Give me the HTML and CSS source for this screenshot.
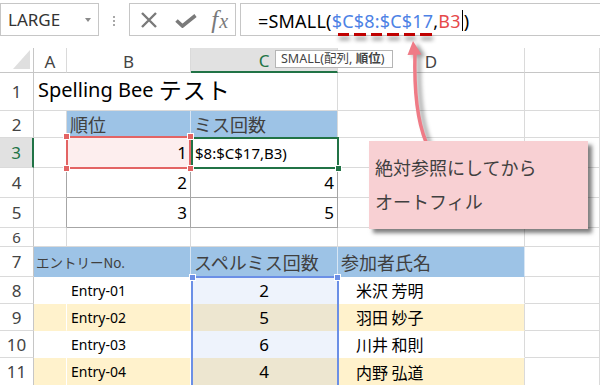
FILE: index.html
```html
<!DOCTYPE html>
<html lang="ja">
<head>
<meta charset="utf-8">
<title>SMALL</title>
<link rel="stylesheet" href="styles.css">
</head>
<body>
<div class="app">
  <div class="toolbar">
    <div class="namebox"><span class="nb-text">LARGE</span><span class="caret"></span></div>
    <div class="grip"><i></i><i></i><i></i></div>
    <div class="btns">
      <svg class="ico-x" width="18" height="16" viewBox="0 0 18 16"><path d="M2 1 L16 15 M16 1 L2 15" stroke="#7a7a7a" stroke-width="2.4" fill="none"/></svg>
      <svg class="ico-ok" width="22" height="14" viewBox="0 0 22 14"><path d="M1.5 6.5 L7.5 12 L20.5 1.5" stroke="#7a7a7a" stroke-width="3.6" fill="none"/></svg>
      <span class="fx"><span class="fx-f">f</span><span class="fx-x">x</span></span>
    </div>
    <div class="formula"><span>=SMALL(</span><span class="f-ref">$C$8:$C$17</span><span>,</span><span class="f-b3">B3</span><span class="cursor"></span><span>)</span></div>
  </div>

  <div class="sheet">
    <div class="c corner"><span class="tri"></span></div>
    <div class="c ch">A</div>
    <div class="c ch">B</div>
    <div class="c ch ch-sel">C</div>
    <div class="c ch">D</div>
    <div class="c ch"></div>

    <div class="c rh">1</div>
    <div class="c span3 title">Spelling Bee&nbsp;<span class="title-ja">テスト</span></div>
    <div class="c"></div>
    <div class="c"></div>

    <div class="c rh">2</div>
    <div class="c"></div>
    <div class="c hd hd-in">順位</div>
    <div class="c hd">ミス回数</div>
    <div class="c"></div>
    <div class="c"></div>

    <div class="c rh rh-sel">3</div>
    <div class="c"></div>
    <div class="c num pink">1</div>
    <div class="c edit">$8:$C$17,B3)</div>
    <div class="c"></div>
    <div class="c"></div>

    <div class="c rh">4</div>
    <div class="c tb-l"></div>
    <div class="c num tb">2</div>
    <div class="c num tb">4</div>
    <div class="c"></div>
    <div class="c"></div>

    <div class="c rh">5</div>
    <div class="c tb-l"></div>
    <div class="c num tb">3</div>
    <div class="c num tb">5</div>
    <div class="c"></div>
    <div class="c"></div>

    <div class="c rh rh-short">6</div>
    <div class="c"></div>
    <div class="c"></div>
    <div class="c"></div>
    <div class="c"></div>
    <div class="c"></div>

    <div class="c rh">7</div>
    <div class="c span2 hd2 entry-hd">エントリーNo.</div>
    <div class="c hd2 hd-in">スペルミス回数</div>
    <div class="c hd2">参加者氏名</div>
    <div class="c"></div>

    <div class="c rh">8</div>
    <div class="c tw"></div>
    <div class="c tw entry">Entry-01</div>
    <div class="c tw cnt">2</div>
    <div class="c tw name">米沢 芳明</div>
    <div class="c"></div>

    <div class="c rh">9</div>
    <div class="c tw cream"></div>
    <div class="c tw cream entry">Entry-02</div>
    <div class="c tw cnt cnt-cream">5</div>
    <div class="c tw cream name">羽田 妙子</div>
    <div class="c"></div>

    <div class="c rh">10</div>
    <div class="c tw"></div>
    <div class="c tw entry">Entry-03</div>
    <div class="c tw cnt">6</div>
    <div class="c tw name">川井 和則</div>
    <div class="c"></div>

    <div class="c rh">11</div>
    <div class="c tw cream"></div>
    <div class="c tw cream entry">Entry-04</div>
    <div class="c tw cnt cnt-cream">4</div>
    <div class="c tw cream name">内野 弘道</div>
    <div class="c"></div>
  </div>

  <div class="frame-green"><span class="h h-br"></span></div>
  <div class="frame-red"><span class="h h-tl"></span><span class="h h-tr"></span><span class="h h-bl"></span><span class="h h-br"></span></div>
  <div class="frame-blue"><span class="h h-tl"></span><span class="h h-tr"></span></div>

  <div class="dashes"></div>
  <div class="tip">SMALL(配列, <b>順位</b>)</div>
  <svg class="arrow" width="45" height="115" viewBox="0 0 45 115">
    <path d="M20 18 C19 55 22 85 31 107" stroke="#ef7b86" stroke-width="3.5" fill="none"/>
    <polygon points="18,6 12.5,20 26.5,19.5" fill="#ef7b86"/>
  </svg>
  <div class="callout">
    <div>絶対参照にしてから</div>
    <div>オートフィル</div>
  </div>
</div>
</body>
</html>
```

FILE: styles.css
```css
body {
  margin: 0;
  background: #fff;
  font-family: "Noto Sans", "Noto Sans CJK JP", sans-serif;
}

.app {
  position: relative;
  width: 600px;
  height: 385px;
  overflow: hidden;
}

/* ---------- toolbar ---------- */
.toolbar {
  height: 48px;
  box-sizing: border-box;
  padding-top: 3px;
  display: flex;
  align-items: flex-start;
}

.namebox {
  width: 101px;
  height: 33px;
  box-sizing: border-box;
  border: 1px solid #c6c6c6;
  display: flex;
  align-items: center;
  padding-left: 7px;
}

.nb-text {
  font-size: 17px;
  color: #333;
}

.caret {
  margin-left: auto;
  margin-right: 7px;
  width: 0;
  height: 0;
  border-left: 3.5px solid transparent;
  border-right: 3.5px solid transparent;
  border-top: 4px solid #8a8a8a;
}

.grip {
  width: 31px;
  display: flex;
  flex-direction: column;
  align-items: center;
  gap: 2px;
  padding-top: 13px;
}

.grip i {
  display: block;
  width: 2px;
  height: 2px;
  background: #a8a8a8;
}

.btns {
  width: 109px;
  height: 33px;
  box-sizing: border-box;
  border: 1px solid #c6c6c6;
  display: flex;
  align-items: center;
  padding-left: 10px;
}

.ico-x {
  margin-right: 17px;
}

.ico-ok {
  margin-right: 14px;
  margin-top: 3px;
}

.fx {
  font-family: "Liberation Serif", serif;
  font-style: italic;
  color: #7a7a7a;
  display: flex;
  align-items: baseline;
}

.fx-f {
  font-size: 25px;
}

.fx-x {
  font-size: 20px;
  margin-left: 1px;
}

.formula {
  margin-left: 4px;
  flex: 1 0 360px;
  height: 33px;
  box-sizing: border-box;
  border: 1px solid #c6c6c6;
  border-right: none;
  padding-left: 17px;
  padding-top: 2px;
  display: flex;
  align-items: center;
  font-size: 18px;
  letter-spacing: 0.2px;
  color: #000;
  white-space: nowrap;
}

.f-ref { color: #4d82e5; }
.f-b3 { color: #e6494a; }

.cursor {
  width: 1px;
  height: 21px;
  background: #000;
  margin: 0 1px;
}

/* ---------- sheet ---------- */
.sheet {
  display: grid;
  grid-template-columns: 34px 33px 124px 147px 187px 75px;
  grid-template-rows: 25px 38px 27px 30px 30px 30px 19px 30px 27px 27px 27px 28px;
}

.c {
  box-sizing: border-box;
  border-right: 1px solid #dadada;
  border-bottom: 1px solid #dadada;
  display: flex;
  align-items: center;
  white-space: nowrap;
  overflow: hidden;
  font-size: 17px;
  color: #000;
}

.corner {
  position: relative;
  border-right-color: #c6c6c6;
  border-bottom-color: #c6c6c6;
}

.tri {
  position: absolute;
  right: 3px;
  bottom: 3px;
  width: 17px;
  height: 19px;
  background: #dfdfdf;
  clip-path: polygon(100% 0, 100% 100%, 0 100%);
}

.ch {
  justify-content: center;
  color: #444;
  border-bottom-color: #c6c6c6;
  padding-top: 2px;
}

.ch-sel {
  background: #e1e1e1;
  color: #217346;
  border-bottom: 2px solid #217346;
}

.rh {
  justify-content: center;
  color: #444;
  border-right-color: #c6c6c6;
  line-height: 1;
}

.rh-short {
  font-size: 15px;
  line-height: 17px;
}

.rh-sel {
  background: #e1e1e1;
  color: #217346;
  border-right: 2px solid #217346;
}

.span3 { grid-column: span 3; }
.span2 { grid-column: span 2; }

.title {
  font-size: 20px;
  padding-left: 4px;
  padding-bottom: 5px;
}

.title-ja {
  font-family: "Noto Sans CJK JP", sans-serif;
  font-size: 23px;
  letter-spacing: 1px;
}

.hd {
  background: #9dc3e6;
  color: #404040;
  font-family: "Noto Sans CJK JP", sans-serif;
  font-size: 18px;
  padding-left: 3px;
  border-bottom-color: #9dc3e6;
}

.hd-in {
  border-right-color: #d8e6f4;
}

.pink {
  background: #fdeeee;
}

.num {
  justify-content: flex-end;
  padding-right: 3px;
}

.edit {
  padding-left: 4px;
  font-size: 15px;
}

.tb-l {
  border-right-color: #a6a6a6;
}

.tb {
  border-right-color: #a6a6a6;
  border-bottom-color: #a6a6a6;
}

.hd2 {
  background: #9dc3e6;
  color: #404040;
  font-family: "Noto Sans CJK JP", sans-serif;
  font-size: 18px;
  padding-left: 3px;
  border-right-color: #d8e6f4;
  border-bottom-color: #9dc3e6;
}

.entry-hd {
  font-size: 13.5px;
  padding-left: 2px;
}

.tw {
  border-right-color: #fff;
  border-bottom-color: transparent;
}

.cream {
  background: #fff2cc;
}

.entry {
  font-size: 14px;
  padding-left: 4px;
}

.cnt {
  justify-content: center;
  background: #eef3fc;
}

.cnt-cream {
  background: #ede6d0;
}

.name {
  font-family: "Noto Sans CJK JP", sans-serif;
  font-size: 16px;
  padding-left: 18px;
  border-right-color: #dadada;
}

/* ---------- overlays ---------- */
.frame-red {
  position: absolute;
  left: 66px;
  top: 136px;
  width: 125px;
  height: 33px;
  box-sizing: border-box;
  border: 2px solid #e36464;
}

.frame-green {
  position: absolute;
  left: 191px;
  top: 137px;
  width: 148px;
  height: 32px;
  box-sizing: border-box;
  border: 2px solid #217346;
}

.frame-blue {
  position: absolute;
  left: 191px;
  top: 276px;
  width: 148px;
  height: 130px;
  box-sizing: border-box;
  border: 2px solid #6b8fe6;
  border-bottom: none;
}

.h {
  position: absolute;
  width: 5px;
  height: 5px;
  border: 1px solid #fff;
}

.frame-red .h { background: #e36464; }
.frame-green .h { background: #217346; }
.frame-blue .h { background: #6b8fe6; }

.h-tl { left: -5px; top: -5px; }
.h-tr { right: -5px; top: -5px; }
.h-bl { left: -5px; bottom: -5px; }
.h-br { right: -5px; bottom: -5px; }

.frame-blue .h-tl { left: -4px; top: -4px; }
.frame-blue .h-tr { right: -4px; top: -4px; }

.dashes {
  position: absolute;
  left: 338px;
  top: 33px;
  width: 95px;
  height: 3px;
  background: repeating-linear-gradient(90deg, #c00000 0 11.5px, transparent 11.5px 16.5px);
  filter: drop-shadow(1px 4px 2px rgba(0, 0, 0, 0.45));
}

.tip {
  position: absolute;
  left: 275px;
  top: 50px;
  width: 118px;
  height: 18px;
  box-sizing: border-box;
  border: 1px solid #b5b5b5;
  background: #fff;
  font-size: 12.5px;
  line-height: 16px;
  color: #444;
  padding-left: 5px;
  white-space: nowrap;
}

.tip b {
  font-weight: 700;
}

.arrow {
  position: absolute;
  left: 395px;
  top: 35px;
  filter: drop-shadow(4px 2px 2px rgba(0, 0, 0, 0.4));
}

.callout {
  position: absolute;
  left: 369px;
  top: 141px;
  width: 219px;
  height: 88px;
  box-sizing: border-box;
  background: #f8d0d3;
  box-shadow: 4px 4px 4px rgba(0, 0, 0, 0.5);
  padding: 9px 0 0 6px;
  font-family: "Noto Sans CJK JP", sans-serif;
  font-size: 18px;
  line-height: 34px;
  color: #404040;
}
```
